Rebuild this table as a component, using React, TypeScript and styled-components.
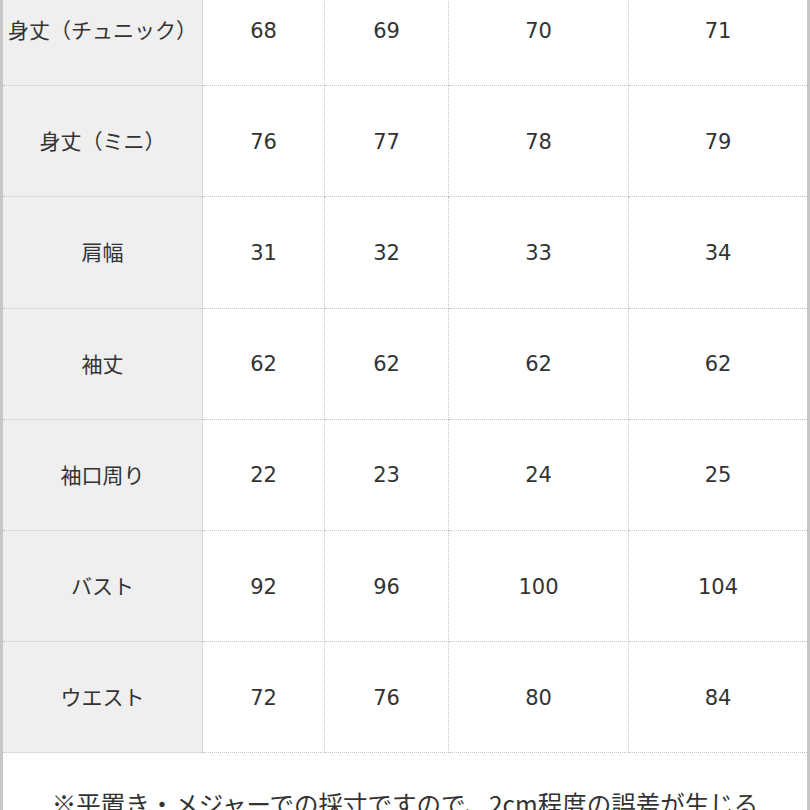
import React from "react";
import styled, { createGlobalStyle } from "styled-components";

const Global = createGlobalStyle`
  html, body { margin: 0; padding: 0; background: #ffffff; }
  body { overflow: hidden; width: 810px; height: 810px; }
`;

const Frame = styled.div`
  box-sizing: border-box;
  width: 810px;
  margin-top: -25px;
  border-left: 3px solid #c6c6c6;
  border-right: 3px solid #c6c6c6;
  background: #ffffff;
  font-family: "DejaVu Sans", "Noto Sans CJK JP", sans-serif;
  color: #333333;
`;

const Grid = styled.div`
  display: grid;
  grid-template-columns: 200px 122px 124px 180px 178px;
  grid-auto-rows: 111.2px;
`;

const Cell = styled.div<{ $head?: boolean; $last?: boolean }>`
  box-sizing: border-box;
  display: flex;
  align-items: center;
  justify-content: center;
  padding-top: ${(p) => (p.$head ? "0" : "1px")};
  padding-bottom: ${(p) => (p.$head ? "2px" : "0")};
  background: ${(p) => (p.$head ? "#efefef" : "#ffffff")};
  border-bottom: 1px dotted #c4c4c4;
  border-right: ${(p) => (p.$last ? "none" : "1px dotted #c4c4c4")};
  font-size: 21px;
  font-family: ${(p) =>
    p.$head
      ? `"Noto Sans CJK JP", sans-serif`
      : `"DejaVu Sans", "Noto Sans CJK JP", sans-serif`};
  white-space: nowrap;
`;

const Note = styled.div`
  padding: 34px 10px 20px;
  text-align: center;
  font-family: "Noto Sans CJK JP", sans-serif;
  font-size: 24.5px;
  line-height: 34px;
  color: #333333;
  white-space: nowrap;
`;

const rows: [string, string[]][] = [
  ["身丈（チュニック）", ["68", "69", "70", "71"]],
  ["身丈（ミニ）", ["76", "77", "78", "79"]],
  ["肩幅", ["31", "32", "33", "34"]],
  ["袖丈", ["62", "62", "62", "62"]],
  ["袖口周り", ["22", "23", "24", "25"]],
  ["バスト", ["92", "96", "100", "104"]],
  ["ウエスト", ["72", "76", "80", "84"]],
];

export default function App() {
  return (
    <>
      <Global />
      <Frame>
        <Grid>
          {rows.map(([label, values]) => (
            <React.Fragment key={label}>
              <Cell $head>{label}</Cell>
              {values.map((v, i) => (
                <Cell key={i} $last={i === values.length - 1}>
                  {v}
                </Cell>
              ))}
            </React.Fragment>
          ))}
        </Grid>
        <Note>
          ※平置き・メジャーでの採寸ですので、2cm程度の誤差が生じる
          <br />
          場合がございます。
        </Note>
      </Frame>
    </>
  );
}
